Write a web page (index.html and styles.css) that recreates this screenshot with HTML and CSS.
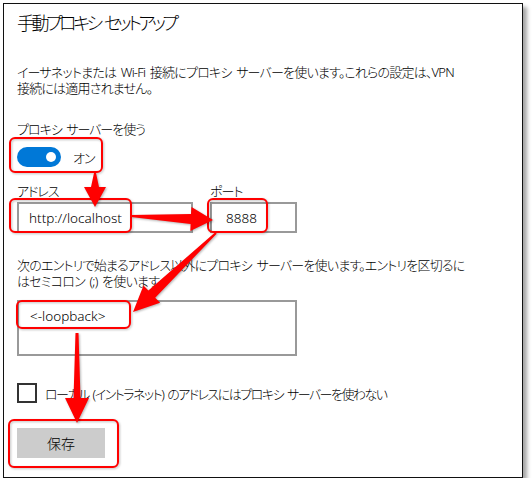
FILE: index.html
```html
<!DOCTYPE html>
<html lang="ja">
<head>
    <meta charset="UTF-8">
    <meta name="viewport" content="width=device-width, initial-scale=1.0">
    <title>手動プロキシ セットアップ</title>
    <link rel="stylesheet" href="styles.css">
</head>
<body>
    <div class="frame">
        <h1 class="title">手動プロキシ セットアップ</h1>

        <p class="desc intro">イーサネットまたは Wi-Fi 接続にプロキシ サーバーを使います。これらの設定は、VPN 接続には適用されません。</p>

        <div class="use-label">プロキシ サーバーを使う</div>
        <div class="toggle-row">
            <span class="toggle on"><span class="knob"></span></span>
            <span class="toggle-text">オン</span>
        </div>

        <div class="address-row">
            <div class="field address">
                <label for="address">アドレス</label>
                <input id="address" type="text" value="http://localhost">
            </div>
            <div class="field port">
                <label for="port">ポート</label>
                <input id="port" type="text" value="8888">
            </div>
        </div>

        <p class="desc exceptions">次のエントリで始まるアドレス以外にプロキシ サーバーを使います。エントリを区切るにはセミコロン (;) を使います。</p>
        <textarea class="exceptions-box">&lt;-loopback&gt;</textarea>

        <div class="check-row">
            <span class="checkbox"></span>
            <span class="check-text">ローカル (イントラネット) のアドレスにはプロキシ サーバーを使わない</span>
        </div>

        <button class="save">保存</button>
    </div>

    <!-- 赤い注釈 (枠と矢印) -->
    <svg class="annotations" width="532" height="487" viewBox="0 0 532 487">
        <g class="marks" fill="none" stroke="#f00" stroke-width="2">
            <rect x="10" y="138" width="92" height="34" rx="5"/>
            <rect x="10" y="199" width="121" height="33" rx="5"/>
            <rect x="208" y="199" width="59" height="33" rx="5"/>
            <rect x="17" y="301" width="113" height="27" rx="5"/>
            <rect x="9" y="420" width="109" height="47" rx="5"/>
        </g>
        <g class="arrows" fill="#f00">
            <polygon points="94,173 96,173 99,187 106,187 95,207 84,187 91,187"/>
            <polygon points="131,215 191,213.9 191.5,206.9 213,220 190.3,230.9 190.6,223.9 131,217"/>
            <polygon points="215.3,232.3 148.4,290.5 143.5,285.4 133,312 160.1,302.8 155.2,297.7 216.7,233.7"/>
            <polygon points="75.5,333 78.5,333 80.5,398 89,398 77,423 65,398 73.5,398"/>
        </g>
    </svg>
</body>
</html>
```

FILE: styles.css
```css
body {
    margin: 0;
    background-color: white;
    font-family: "Noto Sans", "Noto Sans CJK JP", sans-serif;
    font-feature-settings: "palt";
    font-weight: 300;
    color: #000;
}
.frame {
    box-sizing: border-box;
    width: 520px;
    height: 475px;
    margin: 3px 0 0 3px;
    padding: 5px 13px 0;
    border: 1px solid #111;
    background-color: white;
    box-shadow: 4px 4px 4px rgba(0,0,0,0.35);
}
.title {
    margin: 0;
    font-size: 18px;
    line-height: 28px;
    font-weight: 300;
    letter-spacing: -3.5px;
    word-spacing: 3px;
}
.desc {
    margin: 0;
    font-size: 13px;
    line-height: 16px;
    letter-spacing: -0.8px;
    word-spacing: 2px;
}
.intro {
    width: 470px;
    margin-top: 27px;
    word-break: keep-all;
}
.use-label {
    margin-top: 25px;
    font-size: 13px;
    line-height: 16px;
    letter-spacing: -1px;
    word-spacing: 2px;
}
.toggle-row {
    display: flex;
    align-items: center;
    gap: 12px;
    margin-top: 10px;
    height: 20px;
    font-size: 13px;
    letter-spacing: -1px;
}
.toggle {
    box-sizing: border-box;
    display: flex;
    align-items: center;
    justify-content: flex-end;
    width: 44px;
    height: 20px;
    padding-right: 5px;
    border-radius: 10px;
    background-color: #0078d7;
}
.knob {
    width: 10px;
    height: 10px;
    border-radius: 50%;
    background-color: white;
}
.address-row {
    display: flex;
    gap: 17px;
    margin-top: 16px;
}
.field {
    display: flex;
    flex-direction: column;
    gap: 3px;
}
.field label {
    font-size: 13px;
    line-height: 16px;
    letter-spacing: -1px;
}
.field input {
    box-sizing: border-box;
    height: 31px;
    margin: 0;
    padding: 0 10px;
    border: 2px solid #999;
    font-family: inherit;
    font-weight: 300;
    font-size: 13.5px;
    color: #000;
    outline: none;
}
.address input {
    width: 176px;
}
.port input {
    width: 87px;
    padding-left: 14px;
}
.exceptions {
    width: 454px;
    margin-top: 24px;
}
.exceptions-box {
    box-sizing: border-box;
    display: block;
    width: 280px;
    height: 56px;
    margin: 11px 0 0;
    padding: 6px 11px;
    border: 2px solid #999;
    font-family: inherit;
    font-weight: 300;
    font-size: 13.5px;
    line-height: 16px;
    color: #000;
    resize: none;
    overflow: hidden;
    outline: none;
}
.check-row {
    display: flex;
    align-items: center;
    gap: 8px;
    margin-top: 27px;
    font-size: 13px;
    letter-spacing: -1.5px;
    word-spacing: 2px;
}
.checkbox {
    box-sizing: border-box;
    width: 20px;
    height: 20px;
    border: 2px solid #333;
}
.save {
    display: block;
    width: 88px;
    height: 30px;
    margin-top: 25px;
    padding: 0;
    border: none;
    background-color: #ccc;
    font-family: inherit;
    font-weight: 300;
    font-size: 14px;
    color: #000;
}
.annotations {
    position: absolute;
    left: 0;
    top: 0;
    pointer-events: none;
}
.marks {
    filter: drop-shadow(1px 1px 1px rgba(0,0,0,0.25));
}
.arrows {
    filter: drop-shadow(1px 1px 1px rgba(0,0,0,0.3));
}
```
